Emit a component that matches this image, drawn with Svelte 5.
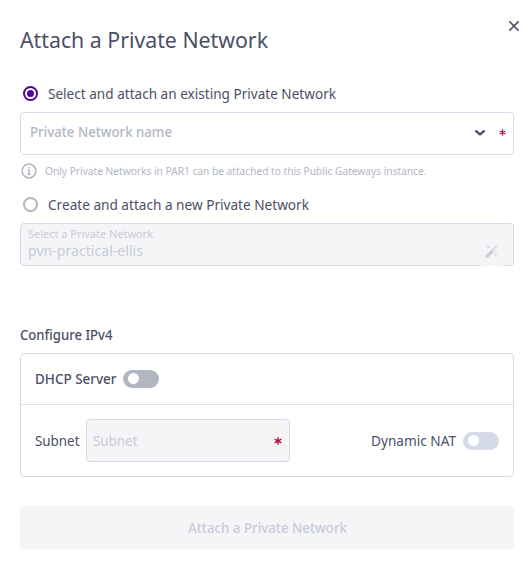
<script>
  let mode = $state('existing');

  // Condenses a text node horizontally so that it takes exactly the given width.
  function fit(node, width) {
    const natural = node.getBoundingClientRect().width;
    node.style.transform = `scaleX(${width / natural})`;
    node.style.marginRight = `${width - natural}px`;
  }
</script>

<main class="dialog">
  <header>
    <h1><span class="fit" use:fit={248}>Attach a Private Network</span></h1>
    <button class="close" aria-label="Close">
      <svg width="12" height="12" viewBox="0 0 12 12"><path d="M1.4 1.4 10.6 10.6M10.6 1.4 1.4 10.6" /></svg>
    </button>
  </header>

  <label class="option">
    <input type="radio" bind:group={mode} value="existing" />
    <span class="dot"></span>
    <span class="fit" use:fit={288}>Select and attach an existing Private Network</span>
  </label>

  <div class="field select">
    <div class="placeholder"><span class="fit" use:fit={142}>Private Network name</span></div>
    <svg class="chevron" width="12" height="8" viewBox="0 0 12 8"><path d="M2.1 2.1 6 5.3 9.9 2.1" /></svg>
    <svg class="star" width="7" height="7" viewBox="0 0 8 8"><path d="M4 .4V7.6M.8 2.2 7.2 5.8M7.2 2.2.8 5.8" /></svg>
  </div>

  <div class="hint">
    <svg width="16" height="16" viewBox="0 0 16 16">
      <circle cx="8" cy="8" r="6.9" />
      <path d="M6.6 7.2H8.1V11.2M6.4 11.3H9.8" />
      <rect x="7.2" y="4" width="1.7" height="1.6" />
    </svg>
    <span class="fit" use:fit={381.5}>Only Private Networks in PAR1 can be attached to this Public Gateways instance.</span>
  </div>

  <label class="option second">
    <input type="radio" bind:group={mode} value="new" />
    <span class="dot"></span>
    <span class="fit" use:fit={261}>Create and attach a new Private Network</span>
  </label>

  <div class="field name">
    <div class="stack">
      <small><span class="fit" use:fit={125}>Select a Private Network</span></small>
      <div><span class="fit" use:fit={115}>pvn-practical-ellis</span></div>
    </div>
    <div class="wand">
      <svg width="14" height="14" viewBox="0 0 14 14">
        <path class="stick" d="M2.4 12.2 8.9 5.7" />
        <path class="tip" d="M7.8 4.9 9.3 3.4 11 5.1 9.5 6.6Z" />
        <path class="sparks" d="M3.2 1H5.6V3.2H3.2ZM10.4 1H12.8V3.2H10.4ZM10.4 8.4H12.8V10.6H10.4Z" />
      </svg>
    </div>
  </div>

  <h2><span class="fit" use:fit={92.5}>Configure IPv4</span></h2>

  <section class="card">
    <div class="row dhcp">
      <div class="t3"><span class="fit" use:fit={81.5}>DHCP Server</span></div>
      <span class="toggle"></span>
    </div>
    <div class="row net">
      <div class="t4"><span class="fit" use:fit={44.5}>Subnet</span></div>
      <div class="field subnet">
        <span class="fit hold" use:fit={44.5}>Subnet</span>
        <svg class="star" width="8" height="8" viewBox="0 0 8 8"><path d="M4 .3V7.7M.6 2.2 7.4 5.8M7.4 2.2.6 5.8" /></svg>
      </div>
      <div class="t5"><span class="fit" use:fit={85}>Dynamic NAT</span></div>
      <span class="toggle off"></span>
    </div>
  </section>

  <button class="submit" disabled><span class="fit" use:fit={159}>Attach a Private Network</span></button>
</main>

<style>
  :global(body) { background: #fff; }
  .dialog {
    box-sizing: border-box;
    width: 532px;
    height: 568px;
    padding: 20px 18px 0 20px;
    color: #4a4f67;
    font: 15px/20px "Noto Sans", "Open Sans", sans-serif;
    white-space: nowrap;
    overflow: hidden;
  }
  .fit { display: inline-block; flex: none; transform-origin: 0 50%; }
  .option .fit, .t3, .t4, .t5, .hold { margin-bottom: 2px; }
  svg { display: block; flex: none; }
  svg path { fill: none; stroke: currentColor; }
  button { font: inherit; border: 0; padding: 0; }
  header { display: flex; justify-content: space-between; height: 63px; }
  h1 { margin: 3px 0 0; font-size: 22px; line-height: 32px; height: 32px; font-weight: 400; }
  .close { width: 12px; height: 12px; margin-right: -6px; background: none; color: #4a4f67; }
  .close path { stroke-width: 1.5; }
  .option { display: flex; align-items: center; height: 21px; padding-left: 3px; }
  .option input { appearance: none; margin: 0; width: 0; height: 0; }
  .dot {
    box-sizing: border-box; width: 15px; height: 15px; margin-right: 10px;
    display: flex; align-items: center; justify-content: center;
    border: 2px solid #b2b6c3; border-radius: 50%;
  }
  input:checked + .dot { border-color: #4f0599; }
  input:checked + .dot::after { content: ""; width: 7px; height: 7px; border-radius: 50%; background: #4f0599; }
  .field {
    box-sizing: border-box; display: flex; align-items: center; height: 43px;
    border: 1px solid #d4dae7; border-radius: 4px;
  }
  .select { margin-top: 8px; padding: 0 7px 0 9px; }
  .placeholder { flex: 1; color: #b2b6c3; font-weight: 500; margin-bottom: 5px; }
  .chevron { margin-bottom: 1px; }
  .chevron path { stroke-width: 2.3; stroke-linecap: round; stroke-linejoin: round; }
  .star { color: #b3143a; }
  .star path { stroke-width: 1.4; }
  .select .star { margin: 0 0 2px 13px; }
  .hint { display: flex; align-items: center; height: 16px; margin: 8px 0 0 1px; gap: 8px; color: #b2b6c3; font-size: 10.5px; }
  .hint circle { fill: none; stroke: currentColor; stroke-width: 1.5; }
  .hint path { stroke-width: 1.4; }
  .hint rect { fill: currentColor; }
  .second { margin-top: 15px; }
  .name { margin-top: 8px; background: #f5f5f8; color: #c7ccda; justify-content: space-between; padding-left: 7px; }
  .stack { display: flex; flex-direction: column; margin-bottom: 3px; font-size: 14.5px; line-height: 18px; }
  .stack small { font-size: 11px; line-height: 14px; }
  .wand { align-self: flex-end; box-sizing: border-box; width: 26px; height: 27px; margin: 0 8px -1px 0; padding: 6px 0 0 5px; background: #f5f5f8; border-radius: 4px; }
  .wand .stick { stroke-width: 3.3; }
  .wand .tip { stroke-width: 1; fill: #f5f5f8; }
  .wand .sparks { fill: currentColor; stroke: none; opacity: .75; }
  h2 { margin: 58px 0 9px; font-size: 15px; line-height: 20px; font-weight: 500; }
  .card { box-sizing: border-box; height: 124px; border: 1px solid #d4dae7; border-radius: 4px; }
  .row { display: flex; align-items: center; box-sizing: border-box; padding: 0 14px; }
  .dhcp { height: 51px; border-bottom: 1px solid #d9dfeb; }
  .net { height: 71px; }
  .t3 { width: 88px; font-weight: 500; }
  .t4 { width: 51px; }
  .t5 { margin-left: auto; width: 92px; }
  .toggle { box-sizing: border-box; width: 36px; height: 18px; padding: 3px 5px; border-radius: 9px; background: #b2b6c3; }
  .toggle::after { content: ""; display: block; width: 11px; height: 11px; border-radius: 50%; background: #fff; }
  .off { background: #d4dae7; }
  .subnet { width: 204px; padding: 0 7px 0 6px; background: #f5f5f8; color: #c7ccda; justify-content: space-between; }
  .submit { display: block; width: 494px; height: 43px; margin-top: 29px; padding-bottom: 2px; border-radius: 4px; background: #f5f5f8; color: #c7ccda; font-weight: 500; text-align: center; }
</style>
